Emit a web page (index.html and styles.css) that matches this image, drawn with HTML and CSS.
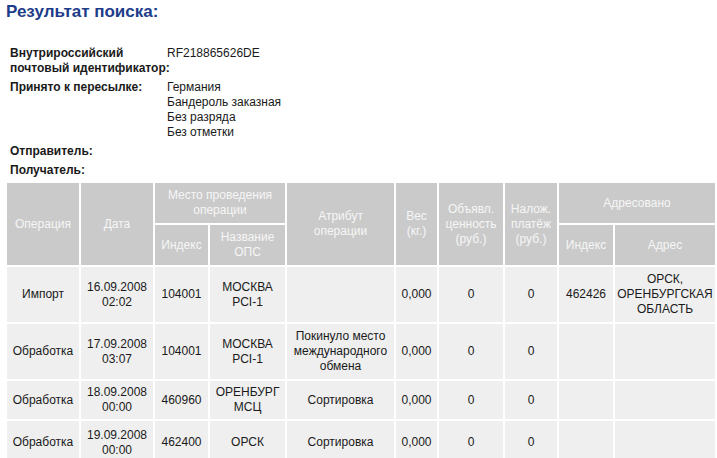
FILE: index.html
```html
<!DOCTYPE html>
<html lang="ru">
<head>
<meta charset="utf-8">
<title>Результат поиска</title>
<link rel="stylesheet" href="styles.css">
</head>
<body>
<h1 class="title">Результат поиска:</h1>

<table class="info">
  <colgroup>
    <col class="info-c-label"><col class="info-c-value">
  </colgroup>
  <tr>
    <th class="info-label">Внутрироссийский<br>почтовый идентификатор:</th>
    <td class="info-value">RF218865626DE</td>
  </tr>
  <tr>
    <th class="info-label">Принято к пересылке:</th>
    <td class="info-value">Германия<br>Бандероль заказная<br>Без разряда<br>Без отметки</td>
  </tr>
  <tr>
    <th class="info-label">Отправитель:</th>
    <td class="info-value"></td>
  </tr>
  <tr>
    <th class="info-label info-last">Получатель:</th>
    <td class="info-value info-last"></td>
  </tr>
</table>

<table class="ops">
  <colgroup>
    <col class="c-op"><col class="c-date"><col class="c-idx"><col class="c-name"><col class="c-attr">
    <col class="c-wt"><col class="c-decl"><col class="c-cod"><col class="c-idx2"><col class="c-addr">
  </colgroup>
  <thead>
    <tr class="hrow">
      <th rowspan="2">Операция</th>
      <th rowspan="2">Дата</th>
      <th colspan="2">Место проведения операции</th>
      <th rowspan="2">Атрибут<br>операции</th>
      <th rowspan="2">Вес<br>(кг.)</th>
      <th rowspan="2">Объявл.<br>ценность<br>(руб.)</th>
      <th rowspan="2">Налож.<br>платёж<br>(руб.)</th>
      <th colspan="2">Адресовано</th>
    </tr>
    <tr class="hrow">
      <th>Индекс</th>
      <th>Название<br>ОПС</th>
      <th>Индекс</th>
      <th>Адрес</th>
    </tr>
  </thead>
  <tbody>
    <tr class="row-tall">
      <td>Импорт</td>
      <td>16.09.2008<br>02:02</td>
      <td>104001</td>
      <td>МОСКВА<br>PCI-1</td>
      <td></td>
      <td>0,000</td>
      <td>0</td>
      <td>0</td>
      <td>462426</td>
      <td>ОРСК,<br>ОРЕНБУРГСКАЯ<br>ОБЛАСТЬ</td>
    </tr>
    <tr class="row-tall">
      <td>Обработка</td>
      <td>17.09.2008<br>03:07</td>
      <td>104001</td>
      <td>МОСКВА<br>PCI-1</td>
      <td>Покинуло место<br>международного<br>обмена</td>
      <td>0,000</td>
      <td>0</td>
      <td>0</td>
      <td></td>
      <td></td>
    </tr>
    <tr class="row-short">
      <td>Обработка</td>
      <td>18.09.2008<br>00:00</td>
      <td>460960</td>
      <td>ОРЕНБУРГ<br>МСЦ</td>
      <td>Сортировка</td>
      <td>0,000</td>
      <td>0</td>
      <td>0</td>
      <td></td>
      <td></td>
    </tr>
    <tr class="row-last">
      <td>Обработка</td>
      <td>19.09.2008<br>00:00</td>
      <td>462400</td>
      <td>ОРСК</td>
      <td>Сортировка</td>
      <td>0,000</td>
      <td>0</td>
      <td>0</td>
      <td></td>
      <td></td>
    </tr>
  </tbody>
</table>
</body>
</html>
```
FILE: styles.css
```css
html, body {
  margin: 0;
  padding: 0;
  background: #ffffff;
  overflow: hidden;
}

body {
  font-family: "Liberation Sans", Arial, sans-serif;
  font-size: 12px;
  line-height: 15px;
  color: #1a1a1a;
}

.title {
  margin: 0;
  padding: 2px 0 0 6px;
  font-size: 17px;
  line-height: 20px;
  font-weight: bold;
  color: #1d3c8a;
}

.info {
  margin: 24px 0 0 10px;
  border-collapse: collapse;
  table-layout: fixed;
  width: 400px;
}

.info-c-label { width: 157px; }
.info-c-value { width: 243px; }

.info-label {
  padding: 0 0 4px 0;
  text-align: left;
  vertical-align: top;
  font-weight: bold;
  white-space: nowrap;
}

.info-value {
  padding: 0 0 4px 0;
  vertical-align: top;
}

.info-last {
  padding-bottom: 0;
}

.ops {
  margin: 3px 0 0 5px;
  border-spacing: 2px;
  table-layout: fixed;
  width: 712px;
}

.c-op { width: 72px; }
.c-date { width: 72px; }
.c-idx { width: 53px; }
.c-name { width: 75px; }
.c-attr { width: 107px; }
.c-wt { width: 41px; }
.c-decl { width: 64px; }
.c-cod { width: 52px; }
.c-idx2 { width: 54px; }
.c-addr { width: 100px; }

.ops th,
.ops td {
  padding: 2px 1px;
  text-align: center;
  vertical-align: middle;
}

.ops th {
  background: #cacaca;
  color: #f6f6f6;
  font-weight: normal;
}

.hrow th {
  height: 36px;
}

.ops td {
  background: #efefef;
  color: #1a1a1a;
  white-space: nowrap;
}

.row-tall td {
  height: 51px;
}

.row-short td {
  height: 34px;
}

.row-last td {
  height: 39px;
}
```
